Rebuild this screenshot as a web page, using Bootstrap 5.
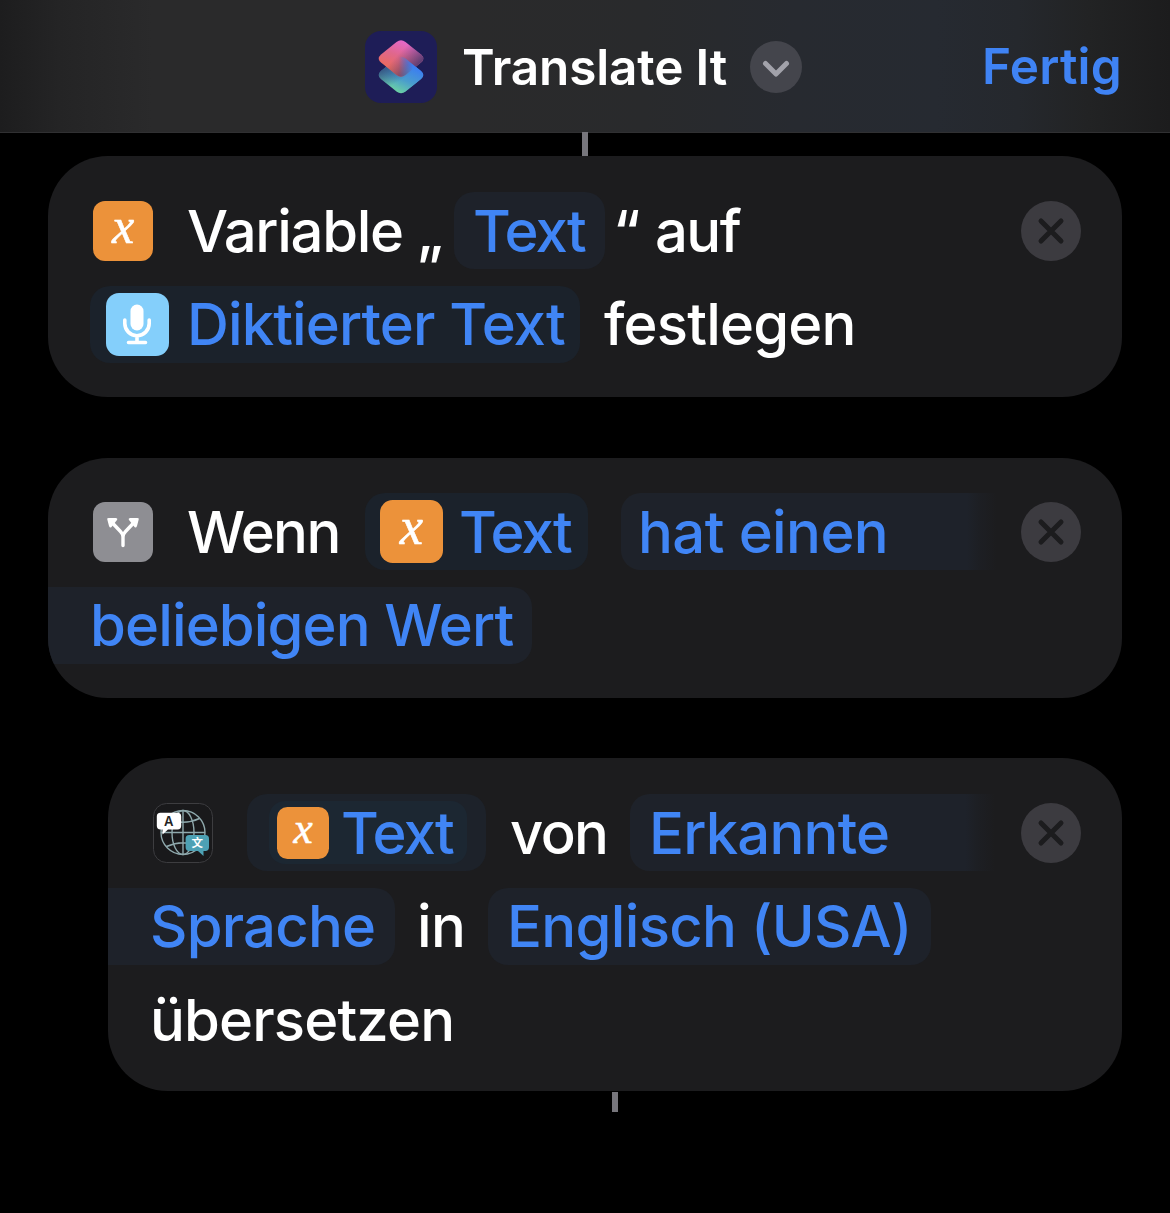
<!DOCTYPE html>
<html lang="de" data-bs-theme="dark">
<head>
<meta charset="utf-8">
<meta name="viewport" content="width=device-width, initial-scale=1">
<title>Translate It</title>
<link href="https://cdn.jsdelivr.net/npm/bootstrap@5.3.0/dist/css/bootstrap.min.css" rel="stylesheet">
<style>
body{background:#000;color:#fff;font-family:Inter,"Liberation Sans",sans-serif;width:1170px;height:1213px;overflow:hidden}
svg{display:block;flex:none}
.topbar{height:133px;padding:2px 48px 0 365px;background:linear-gradient(90deg,#1d1d1e 0,#242425 5%,#2a2a2b 13%,#2a2a2b 40%,#292a2c 55%,#272a30 68%,#262a31 80%,#25282d 87%,#222324 93%,#1c1c1d 100%);border-bottom:1px solid #303032}
.topbar h1{font-size:49.5px;font-weight:600;margin:0 0 0 25px;width:288px;line-height:72px;letter-spacing:-.15px}
.done{font-size:49.5px;font-weight:600;color:#3f83f4;text-decoration:none;line-height:70px;padding-bottom:2px;width:140px;letter-spacing:.2px}
.wire{width:6px;background:#77767c}
.wire-top{height:24px;margin:-1px auto 0}
.wire-end{height:20px;margin:1px 0 0 612px}
.action{background:#1c1c1e;border-radius:60px;margin-left:48px;width:1074px;overflow:hidden;padding-top:36px}
.action.nested{margin-left:108px;width:1014px}
.a-set{height:241px}
.a-if{height:240px;margin-top:61px;padding-top:35px}
.a-translate{height:333px;margin-top:60px}
.line{height:77px;margin-bottom:16.5px;font-size:58px;font-weight:500;line-height:77px;white-space:nowrap}
.line>*,.tok>*{flex:none}
.txt{display:block;padding-top:2px}
.second .txt{padding-top:0}
.lead-icon{margin-left:45px;margin-right:34px}
.close-btn{margin-left:auto;margin-right:41px}
.tok{display:flex;align-items:center;background:#1e222a;color:#4085f5;border-radius:20px;height:77px}
.tok.teal{background:#1b222b}
.tok.fade-end{border-radius:20px 0 0 20px;background:linear-gradient(90deg,#1e222a 92%,#1d1f24 95%,#1c1c1e 100%)}
.tok.fade-start{border-radius:0 20px 20px 0;padding-left:42px}
.tok.outer{width:239px;background:#1d222a;padding-left:22px}
.inner{background:#1c2732;border-radius:16px;height:63px;width:198px;padding-left:8px}
.w-variable{width:232px;letter-spacing:-1.3px}
.w-quote{width:35px;margin-left:-2px;margin-right:2px}
.w-text{letter-spacing:-1.85px}
.t-name{width:151px;padding-left:19px}
.w-quote2{width:41px;margin-left:8px;margin-right:1px}
.w-auf{letter-spacing:-1.6px}
.t-dict{width:490px;margin-left:42px;padding-left:16px}
.w-dict{margin-left:18px;letter-spacing:-.88px}
.w-fest{margin-left:24px;letter-spacing:-.85px}
.w-wenn{width:178px;letter-spacing:-1.6px}
.t-var{width:223px;padding-left:15px}
.t-cond{width:376px;margin-left:33px;padding-left:17px}
.w-cond{letter-spacing:-.6px}
.w-cond2{letter-spacing:-.88px}
.t-cond2{width:484px}
.w-von{width:120px;margin-left:24px;letter-spacing:-1.6px}
.t-src{width:365px;padding-left:19px}
.w-src{letter-spacing:-.8px}
.t-src2{width:287px}
.w-in{width:71px;margin-left:22px;letter-spacing:-.5px}
.t-dst{width:443px;padding-left:19px}
.w-dst{letter-spacing:-.68px}
.w-end{margin-left:42px;letter-spacing:-.85px}
</style>
</head>
<body>
<svg width="0" height="0" class="position-absolute">
  <defs>
    <symbol id="close" viewBox="0 0 60 60"><circle cx="30" cy="30" r="30" fill="#3c3b40"/><path d="M20 20L40 40M40 20L20 40" stroke="#1c1c1e" stroke-width="5" stroke-linecap="round"/></symbol>
    <symbol id="varx" viewBox="0 0 60 60"><rect width="60" height="60" rx="12" fill="#ec923a"/><text x="30" y="42" text-anchor="middle" font-family="Liberation Serif,serif" font-style="italic" font-size="50" fill="#fff" stroke="#fff" stroke-width=".6">x</text></symbol>
  </defs>
</svg>
<header class="topbar d-flex align-items-center">
  <svg width="72" height="72" viewBox="0 0 72 72">
    <defs>
      <linearGradient id="warm" x1=".65" y1="0" x2=".25" y2=".85"><stop offset="0" stop-color="#e568d2"/><stop offset=".5" stop-color="#e0678c"/><stop offset="1" stop-color="#ee6b55"/></linearGradient>
      <linearGradient id="cool" x1=".8" y1=".3" x2=".4" y2="1"><stop offset="0" stop-color="#3c7ff0"/><stop offset=".5" stop-color="#4a9dcd"/><stop offset="1" stop-color="#6fd6a0"/></linearGradient>
      <linearGradient id="shadeR" x1=".5" y1=".3" x2=".95" y2=".65"><stop offset="0" stop-color="#5b3f78" stop-opacity="0"/><stop offset="1" stop-color="#553a70"/></linearGradient>
      <linearGradient id="shadeL" x1=".05" y1=".3" x2=".35" y2=".75"><stop offset="0" stop-color="#35507c"/><stop offset="1" stop-color="#35567f" stop-opacity="0"/></linearGradient>
      <linearGradient id="blend" gradientUnits="userSpaceOnUse" x1="34" y1="0" x2="48" y2="0"><stop offset="0" stop-color="#000"/><stop offset="1" stop-color="#fff"/></linearGradient>
      <mask id="right" maskUnits="userSpaceOnUse" x="0" y="0" width="72" height="72"><rect width="72" height="72" fill="url(#blend)"/></mask>
      <path id="tile" d="M31.500 11Q36 7.500 40.500 11L56 23.500Q60.500 27.500 56 31.500L40.500 44Q36 47.500 31.500 44L16 31.500Q11.500 27.500 16 23.500Z"/>
    </defs>
    <rect width="72" height="72" rx="16" fill="#1e1d57"/>
    <use href="#tile" y="16.500" fill="url(#cool)"/>
    <use href="#tile" y="16.500" fill="url(#shadeL)"/>
    <use href="#tile" fill="url(#warm)"/>
    <use href="#tile" fill="url(#shadeR)"/>
    <g mask="url(#right)"><use href="#tile" y="16.500" fill="url(#cool)"/></g>
  </svg>
  <h1>Translate It</h1>
  <svg width="52" height="52" viewBox="0 0 52 52"><circle cx="26" cy="26" r="26" fill="#44454c"/><path d="M15.500 22.500L26 33 36.500 22.500" fill="none" stroke="#a2a2aa" stroke-width="5" stroke-linecap="round" stroke-linejoin="round"/></svg>
  <a href="#" class="done ms-auto">Fertig</a>
</header>
<main>
  <div class="wire wire-top"></div>

  <section class="action a-set">
    <div class="line d-flex align-items-center">
      <svg class="lead-icon" width="60" height="60"><use href="#varx"/></svg>
      <span class="txt w-variable">Variable</span>
      <span class="txt w-quote">„</span>
      <span class="tok t-name"><span class="txt w-text">Text</span></span>
      <span class="txt w-quote2">“</span>
      <span class="txt w-auf">auf</span>
      <svg class="close-btn" width="60" height="60"><use href="#close"/></svg>
    </div>
    <div class="line second d-flex align-items-center">
      <span class="tok teal t-dict">
        <svg width="63" height="63" viewBox="0 0 63 63"><rect width="63" height="63" rx="13" fill="#84cffb"/><rect x="24.500" y="11.500" width="13" height="26" rx="6.500" fill="#fff"/><path d="M18.800 27V30.500a12.200 12.200 0 0 0 24.400 0V27M31 43V49M22.500 49.500H39.500" fill="none" stroke="#fff" stroke-width="3.600" stroke-linecap="round"/></svg>
        <span class="txt w-dict">Diktierter Text</span>
      </span>
      <span class="txt w-fest">festlegen</span>
    </div>
  </section>

  <section class="action a-if">
    <div class="line d-flex align-items-center">
      <svg class="lead-icon" width="60" height="60" viewBox="0 0 60 60"><rect width="60" height="60" rx="12" fill="#8e8e93"/><path d="M30 43.500V35Q30 32 27.500 29.500L19 20.500M30 35Q30 32 32.500 29.500L41 20.500" fill="none" stroke="#fff" stroke-width="3.400" stroke-linecap="round"/><path d="M14.300 17.500Q13.500 16 15.500 16H22.500Q25 16 24 18L18.500 25Q17 26.500 16 24ZM45.700 17.500Q46.500 16 44.500 16H37.500Q35 16 36 18L41.500 25Q43 26.500 44 24Z" fill="#fff"/></svg>
      <span class="txt w-wenn">Wenn</span>
      <span class="tok teal t-var">
        <svg width="63" height="63"><use href="#varx"/></svg>
        <span class="txt w-text ms-3">Text</span>
      </span>
      <span class="tok fade-end t-cond"><span class="txt w-cond">hat einen</span></span>
      <svg class="close-btn" width="60" height="60"><use href="#close"/></svg>
    </div>
    <div class="line second d-flex align-items-center">
      <span class="tok fade-start t-cond2"><span class="txt w-cond2">beliebigen Wert</span></span>
    </div>
  </section>

  <section class="action nested a-translate">
    <div class="line d-flex align-items-center">
      <svg class="lead-icon" width="60" height="60" viewBox="0 0 60 60"><rect x=".5" y=".5" width="59" height="59" rx="13" fill="#19191b" stroke="#3d3d40"/>
        <g fill="none" stroke="#8fa9ad" stroke-width="1.400"><circle cx="30" cy="29.500" r="22"/><ellipse cx="30" cy="29.500" rx="11" ry="22"/><path d="M30 7.500V51.500M8 29.500H52M13.500 15.500Q30 23 46.500 15.500M13.500 43.500Q30 36 46.500 43.500"/></g>
        <path d="M7.500 9.700H24.500Q28.200 9.700 28.200 13.400V22.800Q28.200 26.500 24.500 26.500H15L9.500 31.500V26.500H7.500Q3.800 26.500 3.800 22.800V13.400Q3.800 9.700 7.500 9.700Z" fill="#fff"/><text x="15.700" y="23" text-anchor="middle" font-size="13" font-weight="600" fill="#222">A</text>
        <path d="M36.300 32H52.300Q56 32 56 35.700V44.300Q56 48 52.300 48H50.500V53L45 48H36.300Q32.600 48 32.600 44.300V35.700Q32.600 32 36.300 32Z" fill="#4da1b4"/><text x="44.300" y="44.300" text-anchor="middle" font-family="Noto Sans CJK SC,sans-serif" font-size="11.500" font-weight="700" fill="#fff">文</text></svg>
      <span class="tok outer">
        <span class="inner d-flex align-items-center"><svg width="52" height="52"><use href="#varx"/></svg><span class="txt w-text ms-2 ps-1">Text</span></span>
      </span>
      <span class="txt w-von">von</span>
      <span class="tok fade-end t-src"><span class="txt w-src">Erkannte</span></span>
      <svg class="close-btn" width="60" height="60"><use href="#close"/></svg>
    </div>
    <div class="line second d-flex align-items-center">
      <span class="tok fade-start t-src2"><span class="txt w-src">Sprache</span></span>
      <span class="txt w-in">in</span>
      <span class="tok t-dst"><span class="txt w-dst">Englisch (USA)</span></span>
    </div>
    <div class="line d-flex align-items-center"><span class="txt w-end">übersetzen</span></div>
  </section>
  <div class="wire wire-end"></div>
</main>
<script src="https://cdn.jsdelivr.net/npm/bootstrap@5.3.0/dist/js/bootstrap.bundle.min.js"></script>
</body>
</html>
